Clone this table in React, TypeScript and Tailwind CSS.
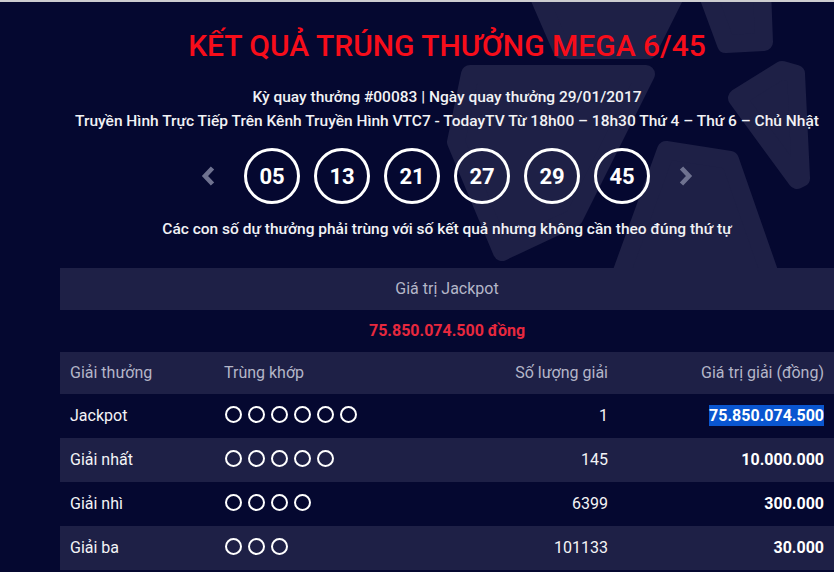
import React from "react";

const BALLS = ["05", "13", "21", "27", "29", "45"];

const ROWS = [
  { name: "Jackpot", n: 6, qty: "1", val: "75.850.074.500", sel: true, light: false },
  { name: "Giải nhất", n: 5, qty: "145", val: "10.000.000", sel: false, light: true },
  { name: "Giải nhì", n: 4, qty: "6399", val: "300.000", sel: false, light: false },
  { name: "Giải ba", n: 3, qty: "101133", val: "30.000", sel: false, light: true },
];

function Chevron({ dir }: { dir: "l" | "r" }) {
  return (
    <svg width="16" height="22" viewBox="0 0 16 22">
      <polyline
        points={dir === "l" ? "12.5,3 5,11 12.5,19" : "3.5,3 11,11 3.5,19"}
        fill="none"
        stroke="#6f7290"
        strokeWidth="4.6"
        strokeLinejoin="miter"
      />
    </svg>
  );
}

function Bg() {
  const c = "#1e2046";
  const p = { fill: c, stroke: c, strokeWidth: 18, strokeLinejoin: "round" as const };
  return (
    <svg className="absolute left-0 top-0" width="834" height="270" viewBox="0 0 834 270">
      <polygon {...p} points="536,-12 678,-12 648,48 562,48" />
      <polygon {...p} points="706,-12 762,-12 764,40 726,42" />
      <polygon {...p} points="470,72 646,72 574,216 502,250 456,140" />
      <polygon {...p} points="666,148 730,158 790,330 600,330" />
      <polygon {...p} points="737,96 782,68 796,72 801,176 797,178" />
    </svg>
  );
}

export default function App() {
  return (
    <div
      className="relative w-[834px] h-[572px] overflow-hidden bg-[#050830] border-t-2 border-[#cdcdd0]"
      style={{ fontFamily: "Roboto, 'Noto Sans', sans-serif" }}
    >
      <Bg />
      <div className="relative ml-[60px] flex flex-col">
        <div className="flex flex-col items-center">
          <h1 className="mt-[27px] text-[30px] leading-[34px] font-medium text-[#f70d1a]">
            KẾT QUẢ TRÚNG THƯỞNG MEGA 6/45
          </h1>
          <p className="mt-[22px] text-[15.5px] leading-[24px] font-medium text-[#f2f2f5]">
            Kỳ quay thưởng #00083 | Ngày quay thưởng 29/01/2017
          </p>
          <p className="text-[15.5px] leading-[24px] font-medium text-[#f2f2f5] whitespace-nowrap">
            Truyền Hình Trực Tiếp Trên Kênh Truyền Hình VTC7 - TodayTV Từ 18h00 – 18h30 Thứ 4 – Thứ 6 – Chủ Nhật
          </p>
          <div className="mt-[15px] flex items-center">
            <div className="mr-[28px] flex w-[16px] justify-center">
              <Chevron dir="l" />
            </div>
            <div className="flex gap-[14px]">
              {BALLS.map((b) => (
                <div
                  key={b}
                  className="flex h-[56px] w-[56px] items-center justify-center rounded-full border-[3px] border-white text-[22px] font-bold text-white"
                >
                  {b}
                </div>
              ))}
            </div>
            <div className="ml-[28px] flex w-[16px] justify-center">
              <Chevron dir="r" />
            </div>
          </div>
          <p className="mt-[13px] text-[15.5px] leading-[24px] font-medium text-[#f2f2f5]">
            Các con số dự thưởng phải trùng với số kết quả nhưng không cần theo đúng thứ tự
          </p>
        </div>

        <div className="mt-[27px] flex flex-col text-[16px]">
          <div className="flex h-[42px] items-center justify-center bg-[#1e2046] text-[#b4b6c8]">
            Giá trị Jackpot
          </div>
          <div className="flex h-[42px] items-center justify-center bg-[#050830] font-bold text-[#e8283e]">
            75.850.074.500 đồng
          </div>
          <div className="grid h-[42px] grid-cols-[154px_1fr_200px_216px] items-center bg-[#1e2046] text-[#b4b6c8]">
            <div className="pl-[10px]">Giải thưởng</div>
            <div className="pl-[10px]">Trùng khớp</div>
            <div className="pr-[10px] text-right">Số lượng giải</div>
            <div className="pr-[10px] text-right">Giá trị giải (đồng)</div>
          </div>
          {ROWS.map((r) => (
            <div
              key={r.name}
              className={
                "grid h-[44px] grid-cols-[154px_1fr_200px_216px] items-center text-[#f4f4f6] " +
                (r.light ? "bg-[#1e2046]" : "bg-[#050830]")
              }
            >
              <div className="pl-[10px]">{r.name}</div>
              <div className="flex gap-[6px] pl-[11px] -mt-[4px]">
                {Array.from({ length: r.n }).map((_, i) => (
                  <span
                    key={i}
                    className="block h-[17px] w-[17px] rounded-full border-[2.5px] border-white"
                  />
                ))}
              </div>
              <div className="pr-[10px] text-right">{r.qty}</div>
              <div className="pr-[10px] text-right font-bold text-white">
                {r.sel ? (
                  <span className="bg-[#0a56d0] py-[1px]">{r.val}</span>
                ) : (
                  r.val
                )}
              </div>
            </div>
          ))}
        </div>
      </div>
    </div>
  );
}
